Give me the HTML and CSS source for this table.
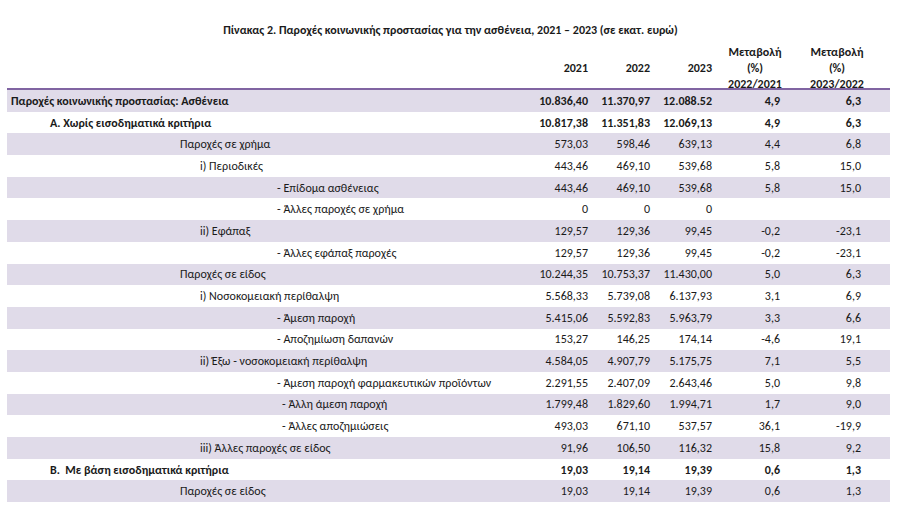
FILE: index.html
```html
<!DOCTYPE html>
<html lang="el">
<head>
    <meta charset="UTF-8">
    <meta name="viewport" content="width=device-width, initial-scale=1.0">
    <title>Πίνακας 2. Παροχές κοινωνικής προστασίας για την ασθένεια</title>
    <link rel="stylesheet" href="styles.css">
</head>
<body>

    <div class="page">
        <h1 class="title">Πίνακας 2. Παροχές κοινωνικής προστασίας για την ασθένεια, 2021 – 2023 (σε εκατ. ευρώ)</h1>

        <div class="table">
            <div class="row head">
                <div class="label"></div>
                <div class="num">2021</div>
                <div class="num">2022</div>
                <div class="num">2023</div>
                <div class="chg">Μεταβολή<br>(%)<br>2022/2021</div>
                <div class="chg">Μεταβολή<br>(%)<br>2023/2022</div>
            </div>

            <div class="row shade bold">
                <div class="label">Παροχές κοινωνικής προστασίας: Ασθένεια</div>
                <div class="num">10.836,40</div>
                <div class="num">11.370,97</div>
                <div class="num">12.088.52</div>
                <div class="pct">4,9</div>
                <div class="pct">6,3</div>
            </div>
            <div class="row bold">
                <div class="label lvl1">Α. Χωρίς εισοδηματικά κριτήρια</div>
                <div class="num">10.817,38</div>
                <div class="num">11.351,83</div>
                <div class="num">12.069,13</div>
                <div class="pct">4,9</div>
                <div class="pct">6,3</div>
            </div>
            <div class="row shade">
                <div class="label lvl2">Παροχές σε χρήμα</div>
                <div class="num">573,03</div>
                <div class="num">598,46</div>
                <div class="num">639,13</div>
                <div class="pct">4,4</div>
                <div class="pct">6,8</div>
            </div>
            <div class="row">
                <div class="label lvl3">i) Περιοδικές</div>
                <div class="num">443,46</div>
                <div class="num">469,10</div>
                <div class="num">539,68</div>
                <div class="pct">5,8</div>
                <div class="pct">15,0</div>
            </div>
            <div class="row shade">
                <div class="label lvl4">- Επίδομα ασθένειας</div>
                <div class="num">443,46</div>
                <div class="num">469,10</div>
                <div class="num">539,68</div>
                <div class="pct">5,8</div>
                <div class="pct">15,0</div>
            </div>
            <div class="row">
                <div class="label lvl4">- Άλλες παροχές σε χρήμα</div>
                <div class="num">0</div>
                <div class="num">0</div>
                <div class="num">0</div>
                <div class="pct"></div>
                <div class="pct"></div>
            </div>
            <div class="row shade">
                <div class="label lvl3">ii) Εφάπαξ</div>
                <div class="num">129,57</div>
                <div class="num">129,36</div>
                <div class="num">99,45</div>
                <div class="pct">-0,2</div>
                <div class="pct">-23,1</div>
            </div>
            <div class="row">
                <div class="label lvl4">- Άλλες εφάπαξ παροχές</div>
                <div class="num">129,57</div>
                <div class="num">129,36</div>
                <div class="num">99,45</div>
                <div class="pct">-0,2</div>
                <div class="pct">-23,1</div>
            </div>
            <div class="row shade">
                <div class="label lvl2">Παροχές σε είδος</div>
                <div class="num">10.244,35</div>
                <div class="num">10.753,37</div>
                <div class="num">11.430,00</div>
                <div class="pct">5,0</div>
                <div class="pct">6,3</div>
            </div>
            <div class="row">
                <div class="label lvl3">i) Νοσοκομειακή περίθαλψη</div>
                <div class="num">5.568,33</div>
                <div class="num">5.739,08</div>
                <div class="num">6.137,93</div>
                <div class="pct">3,1</div>
                <div class="pct">6,9</div>
            </div>
            <div class="row shade">
                <div class="label lvl4">- Άμεση παροχή</div>
                <div class="num">5.415,06</div>
                <div class="num">5.592,83</div>
                <div class="num">5.963,79</div>
                <div class="pct">3,3</div>
                <div class="pct">6,6</div>
            </div>
            <div class="row">
                <div class="label lvl4">- Αποζημίωση δαπανών</div>
                <div class="num">153,27</div>
                <div class="num">146,25</div>
                <div class="num">174,14</div>
                <div class="pct">-4,6</div>
                <div class="pct">19,1</div>
            </div>
            <div class="row shade">
                <div class="label lvl3">ii) Έξω - νοσοκομειακή περίθαλψη</div>
                <div class="num">4.584,05</div>
                <div class="num">4.907,79</div>
                <div class="num">5.175,75</div>
                <div class="pct">7,1</div>
                <div class="pct">5,5</div>
            </div>
            <div class="row">
                <div class="label lvl4">- Άμεση παροχή φαρμακευτικών προϊόντων</div>
                <div class="num">2.291,55</div>
                <div class="num">2.407,09</div>
                <div class="num">2.643,46</div>
                <div class="pct">5,0</div>
                <div class="pct">9,8</div>
            </div>
            <div class="row shade">
                <div class="label lvl4b">- Άλλη άμεση παροχή</div>
                <div class="num">1.799,48</div>
                <div class="num">1.829,60</div>
                <div class="num">1.994,71</div>
                <div class="pct">1,7</div>
                <div class="pct">9,0</div>
            </div>
            <div class="row">
                <div class="label lvl4b">- Άλλες αποζημιώσεις</div>
                <div class="num">493,03</div>
                <div class="num">671,10</div>
                <div class="num">537,57</div>
                <div class="pct">36,1</div>
                <div class="pct">-19,9</div>
            </div>
            <div class="row shade">
                <div class="label lvl3">iii) Άλλες παροχές σε είδος</div>
                <div class="num">91,96</div>
                <div class="num">106,50</div>
                <div class="num">116,32</div>
                <div class="pct">15,8</div>
                <div class="pct">9,2</div>
            </div>
            <div class="row bold">
                <div class="label lvl1">Β.&nbsp; Με βάση εισοδηματικά κριτήρια</div>
                <div class="num">19,03</div>
                <div class="num">19,14</div>
                <div class="num">19,39</div>
                <div class="pct">0,6</div>
                <div class="pct">1,3</div>
            </div>
            <div class="row shade last">
                <div class="label lvl2">Παροχές σε είδος</div>
                <div class="num">19,03</div>
                <div class="num">19,14</div>
                <div class="num">19,39</div>
                <div class="pct">0,6</div>
                <div class="pct">1,3</div>
            </div>
        </div>
    </div>

</body>
</html>
```

FILE: styles.css
```css
body {
    margin: 0;
    padding: 0;
    background: #fff;
    color: #1a1a1a;
    font-family: Carlito, "Open Sans", sans-serif;
    font-size: 12px;
}

.page {
    width: 883px;
    padding: 0 0 0 7px;
}

.title {
    margin: 0;
    padding-top: 22px;
    font-size: 12px;
    line-height: 16px;
    font-weight: bold;
    text-align: center;
    padding-left: 4px;
}

.table {
    margin-top: 6px;
}

.row {
    display: grid;
    grid-template-columns: 1fr 58px 62px 62px 86px 78px;
    padding-right: 14px;
    height: 21.7px;
    align-items: center;
}

.row.head {
    height: 44px;
    font-weight: bold;
    line-height: 16px;
    border-bottom: 2px solid #8064a2;
}

.shade {
    background-color: #e0dbe9;
}

.bold {
    font-weight: bold;
}

.label {
    padding-left: 4px;
    white-space: nowrap;
}

.lvl1 { padding-left: 43px; }
.lvl2 { padding-left: 173px; }
.lvl3 { padding-left: 193px; }
.lvl4 { padding-left: 270px; }
.lvl4b { padding-left: 275px; }

.num {
    text-align: right;
}

.chg {
    text-align: center;
}

.pct {
    text-align: right;
    padding-right: 18px;
}

.row .pct:last-child {
    padding-right: 15px;
}

/* the bottom rule only shows at both ends */
.row.last {
    position: relative;
}

.row.last::before,
.row.last::after {
    content: "";
    position: absolute;
    bottom: -1px;
    height: 1px;
    background: #8064a2;
}

.row.last::before {
    left: 0;
    width: 54px;
}

.row.last::after {
    right: 0;
    width: 52px;
}
```
